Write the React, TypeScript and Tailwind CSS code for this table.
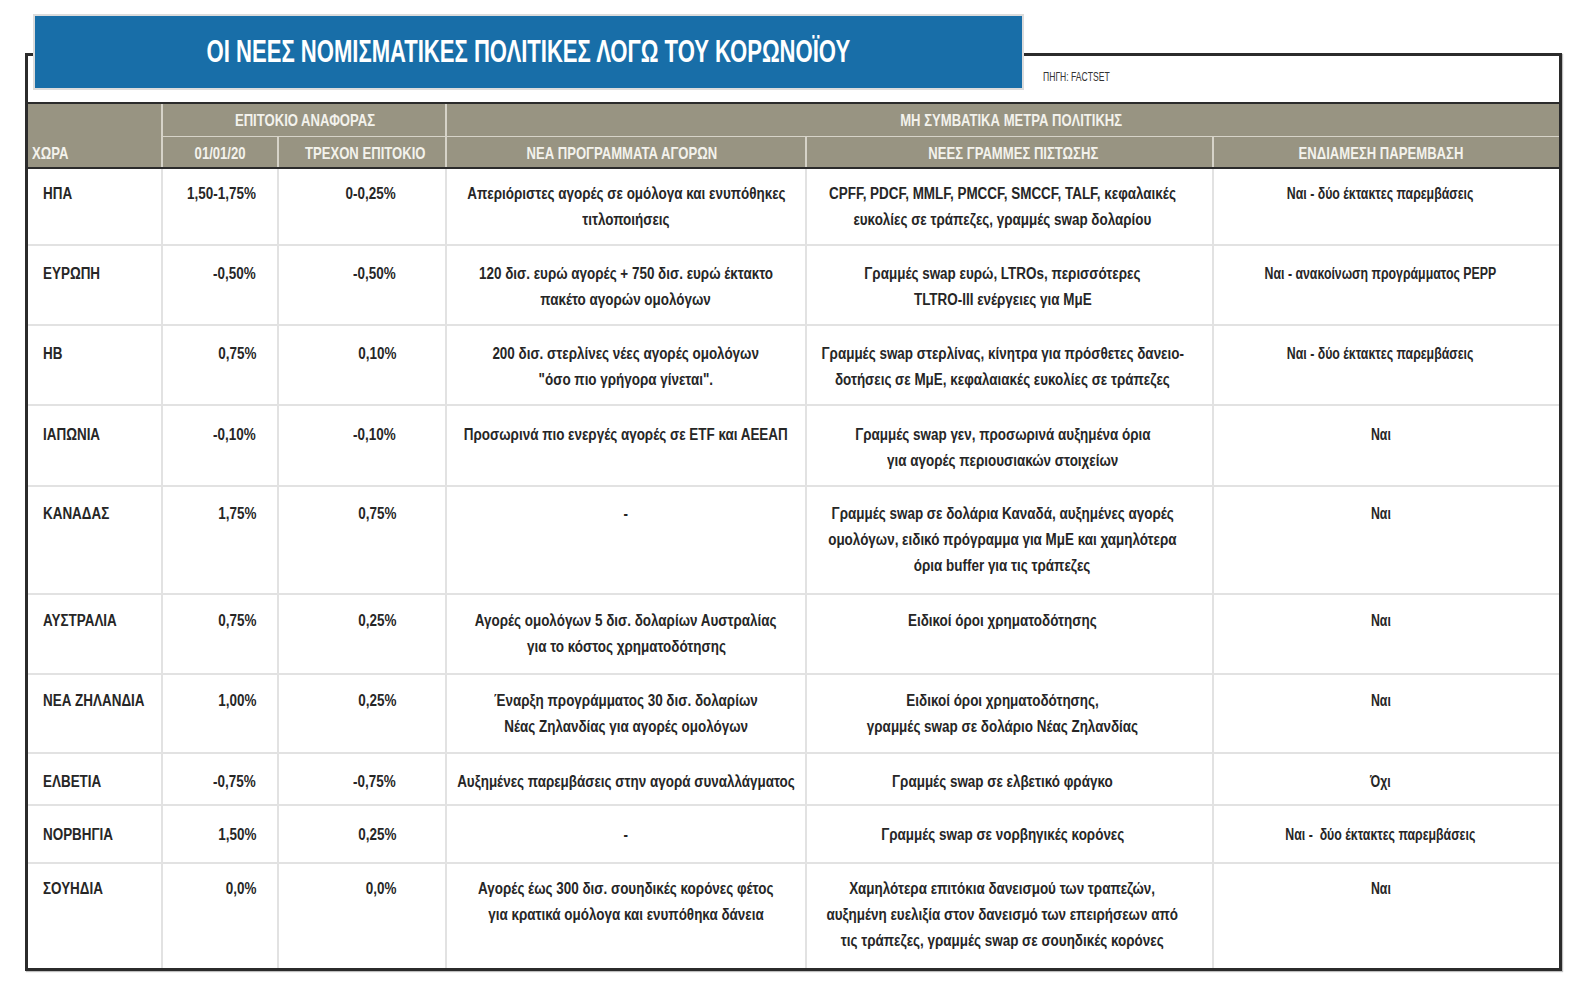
type Row = {
  country: string;
  start: string;
  current: string;
  programs: string[];
  credit: string[];
  action: string[];
  h: string;
  pt: string;
};

const rows: Row[] = [
  {
    country: 'ΗΠΑ',
    start: '1,50-1,75%',
    current: '0-0,25%',
    programs: ['Απεριόριστες αγορές σε ομόλογα και ενυπόθηκες', 'τιτλοποιήσεις'],
    credit: ['CPFF, PDCF, MMLF, PMCCF, SMCCF, TALF, κεφαλαικές', 'ευκολίες σε τράπεζες, γραμμές swap δολαρίου'],
    action: ['Ναι - δύο έκτακτες παρεμβάσεις'],
    h: 'h-[77px]',
    pt: 'pt-[12px]',
  },
  {
    country: 'ΕΥΡΩΠΗ',
    start: '-0,50%',
    current: '-0,50%',
    programs: ['120 δισ. ευρώ αγορές + 750 δισ. ευρώ έκτακτο', 'πακέτο αγορών ομολόγων'],
    credit: ['Γραμμές swap ευρώ, LTROs, περισσότερες', 'TLTRO-III ενέργειες για ΜμΕ'],
    action: ['Ναι - ανακοίνωση προγράμματος PEPP'],
    h: 'h-[80px]',
    pt: 'pt-[15px]',
  },
  {
    country: 'ΗΒ',
    start: '0,75%',
    current: '0,10%',
    programs: ['200 δισ. στερλίνες νέες αγορές ομολόγων', '"όσο πιο γρήγορα γίνεται".'],
    credit: ['Γραμμές swap στερλίνας, κίνητρα για πρόσθετες δανειο-', 'δοτήσεις σε ΜμΕ, κεφαλαιακές ευκολίες σε τράπεζες'],
    action: ['Ναι - δύο έκτακτες παρεμβάσεις'],
    h: 'h-[80px]',
    pt: 'pt-[15px]',
  },
  {
    country: 'ΙΑΠΩΝΙΑ',
    start: '-0,10%',
    current: '-0,10%',
    programs: ['Προσωρινά πιο ενεργές αγορές σε ETF και ΑΕΕΑΠ'],
    credit: ['Γραμμές swap γεν, προσωρινά αυξημένα όρια', 'για αγορές περιουσιακών στοιχείων'],
    action: ['Ναι'],
    h: 'h-[81px]',
    pt: 'pt-[16px]',
  },
  {
    country: 'ΚΑΝΑΔΑΣ',
    start: '1,75%',
    current: '0,75%',
    programs: ['-'],
    credit: [
      'Γραμμές swap σε δολάρια Καναδά, αυξημένες αγορές',
      'ομολόγων, ειδικό πρόγραμμα για ΜμΕ και χαμηλότερα',
      'όρια buffer για τις τράπεζες',
    ],
    action: ['Ναι'],
    h: 'h-[108px]',
    pt: 'pt-[14px]',
  },
  {
    country: 'ΑΥΣΤΡΑΛΙΑ',
    start: '0,75%',
    current: '0,25%',
    programs: ['Αγορές ομολόγων 5 δισ. δολαρίων Αυστραλίας', 'για το κόστος χρηματοδότησης'],
    credit: ['Ειδικοί όροι χρηματοδότησης'],
    action: ['Ναι'],
    h: 'h-[80px]',
    pt: 'pt-[13px]',
  },
  {
    country: 'ΝΕΑ ΖΗΛΑΝΔΙΑ',
    start: '1,00%',
    current: '0,25%',
    programs: ['Έναρξη προγράμματος 30 δισ. δολαρίων', 'Νέας Ζηλανδίας για αγορές ομολόγων'],
    credit: ['Ειδικοί όροι χρηματοδότησης,', 'γραμμές swap σε δολάριο Νέας Ζηλανδίας'],
    action: ['Ναι'],
    h: 'h-[79px]',
    pt: 'pt-[13px]',
  },
  {
    country: 'ΕΛΒΕΤΙΑ',
    start: '-0,75%',
    current: '-0,75%',
    programs: ['Αυξημένες παρεμβάσεις στην αγορά συναλλάγματος'],
    credit: ['Γραμμές swap σε ελβετικό φράγκο'],
    action: ['Όχι'],
    h: 'h-[52px]',
    pt: 'pt-[15px]',
  },
  {
    country: 'ΝΟΡΒΗΓΙΑ',
    start: '1,50%',
    current: '0,25%',
    programs: ['-'],
    credit: ['Γραμμές swap σε νορβηγικές κορόνες'],
    action: ['Ναι -  δύο έκτακτες παρεμβάσεις'],
    h: 'h-[58px]',
    pt: 'pt-[16px]',
  },
  {
    country: 'ΣΟΥΗΔΙΑ',
    start: '0,0%',
    current: '0,0%',
    programs: ['Αγορές έως 300 δισ. σουηδικές κορόνες φέτος', 'για κρατικά ομόλογα και ενυπόθηκα δάνεια'],
    credit: [
      'Χαμηλότερα επιτόκια δανεισμού των τραπεζών,',
      'αυξημένη ευελιξία στον δανεισμό των επειρήσεων από',
      'τις τράπεζες, γραμμές swap σε σουηδικές κορόνες',
    ],
    action: ['Ναι'],
    h: 'h-[104px]',
    pt: 'pt-[12px]',
  },
];

const cols = 'grid grid-cols-[133px_116px_168px_360px_407px_347px]';

// condensed look: Liberation Sans squeezed horizontally
function Centered({ lines }: { lines: string[] }) {
  return (
    <>
      {lines.map((l, i) => (
        <div key={i} className="shrink-0 whitespace-pre scale-x-[0.84] origin-center">
          {l}
        </div>
      ))}
    </>
  );
}

function HeadText({ children }: { children: string }) {
  return <span className="shrink-0 whitespace-pre scale-x-[0.77] origin-center">{children}</span>;
}

export default function App() {
  return (
    <div className="relative w-[1578px] h-[990px] bg-white font-['Liberation_Sans',Arial,sans-serif] text-[#262626]">
      <div className="pt-[53px] pl-[25px]">
        <div className="w-[1537px] border-[3px] border-[#2b2b2b] shadow-[1px_1px_1px_rgba(0,0,0,0.25)]">
          {/* source line */}
          <div className="h-[46px] pl-[1015px] pt-[13px] text-[13px] leading-[16px] text-[#333]">
            <span className="inline-block whitespace-pre scale-x-[0.66] origin-left">ΠΗΓΗ: FACTSET</span>
          </div>

          {/* Header */}
          <div className={`${cols} grid-rows-[33px_30px] border-y-2 border-[#2b2b2b] bg-[#989482] text-[#f3f2ec] font-bold text-[17px]`}>
            <div className="row-span-2 flex items-end pl-[4px] pb-[1px]">
              <span className="whitespace-pre scale-x-[0.77] origin-left">ΧΩΡΑ</span>
            </div>
            <div className="col-span-2 flex items-center justify-center border-l-2 border-b border-[#d6d3c8] pl-[2px] pt-[2px]">
              <HeadText>ΕΠΙΤΟΚΙΟ ΑΝΑΦΟΡΑΣ</HeadText>
            </div>
            <div className="col-span-3 flex items-center justify-center border-l-2 border-b border-[#d6d3c8] pl-[16px] pt-[2px]">
              <HeadText>ΜΗ ΣΥΜΒΑΤΙΚΑ ΜΕΤΡΑ ΠΟΛΙΤΙΚΗΣ</HeadText>
            </div>
            <div className="flex items-center justify-center border-l-2 border-[#d6d3c8] pt-[4px]">
              <HeadText>01/01/20</HeadText>
            </div>
            <div className="flex items-center justify-center border-l-2 border-[#d6d3c8] pl-[7px] pt-[4px]">
              <HeadText>ΤΡΕΧΟΝ ΕΠΙΤΟΚΙΟ</HeadText>
            </div>
            <div className="flex items-center justify-center border-l-2 border-[#d6d3c8] pr-[8px] pt-[4px]">
              <HeadText>ΝΕΑ ΠΡΟΓΡΑΜΜΑΤΑ ΑΓΟΡΩΝ</HeadText>
            </div>
            <div className="flex items-center justify-center border-l-2 border-[#d6d3c8] pl-[7px] pt-[4px]">
              <HeadText>ΝΕΕΣ ΓΡΑΜΜΕΣ ΠΙΣΤΩΣΗΣ</HeadText>
            </div>
            <div className="flex items-center justify-center border-l-2 border-[#d6d3c8] pr-[11px] pt-[4px]">
              <HeadText>ΕΝΔΙΑΜΕΣΗ ΠΑΡΕΜΒΑΣΗ</HeadText>
            </div>
          </div>

          {/* Body */}
          {rows.map((r, i) => (
            <div
              key={r.country}
              className={`${cols} ${r.h} ${i < rows.length - 1 ? 'border-b-2 border-[#e2e2e2]' : ''} text-[16px] leading-[26px] font-bold`}
            >
              <div className={`pl-[15px] ${r.pt}`}>
                <span className="inline-block whitespace-pre scale-x-[0.84] origin-left">{r.country}</span>
              </div>
              <div className={`border-l-2 border-[#e2e2e2] ${r.pt} pr-[21px] text-right`}>
                <span className="inline-block whitespace-pre scale-x-[0.84] origin-right">{r.start}</span>
              </div>
              <div className={`border-l-2 border-[#e2e2e2] ${r.pt} pr-[49px] text-right`}>
                <span className="inline-block whitespace-pre scale-x-[0.84] origin-right">{r.current}</span>
              </div>
              <div className={`border-l-2 border-[#e2e2e2] ${r.pt} flex flex-col items-center`}>
                <Centered lines={r.programs} />
              </div>
              <div className={`border-l-2 border-[#e2e2e2] ${r.pt} pr-[14px] flex flex-col items-center`}>
                <Centered lines={r.credit} />
              </div>
              <div className={`border-l-2 border-[#e2e2e2] ${r.pt} pr-[12px] flex flex-col items-center`}>
                {r.action.map((l, k) => (
                  <div key={k} className="shrink-0 whitespace-pre scale-x-[0.77] origin-center">
                    {l}
                  </div>
                ))}
              </div>
            </div>
          ))}
        </div>
      </div>

      {/* Title banner over the frame */}
      <div className="absolute left-[33px] top-[14px] w-[991px] h-[76px] border-2 border-[#dcdcdc] bg-[#186ea8] flex items-center justify-center pb-[3px]">
        <span className="shrink-0 whitespace-pre text-white font-bold text-[32px] leading-none scale-x-[0.69] origin-center">
          ΟΙ ΝΕΕΣ ΝΟΜΙΣΜΑΤΙΚΕΣ ΠΟΛΙΤΙΚΕΣ ΛΟΓΩ ΤΟΥ ΚΟΡΩΝΟΪΟΥ
        </span>
      </div>
    </div>
  );
}
